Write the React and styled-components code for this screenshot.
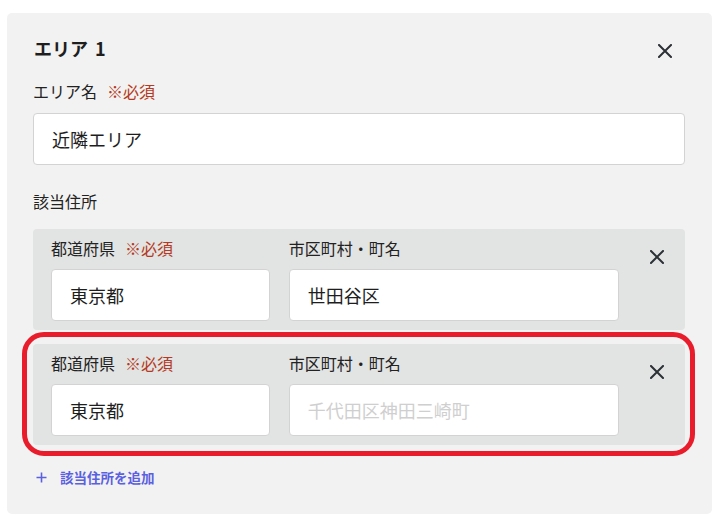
import React from 'react';
import styled, { createGlobalStyle } from 'styled-components';

const GlobalStyle = createGlobalStyle`
    body {
        margin: 0;
        background: #ffffff;
        font-family: "Noto Sans CJK JP", "Noto Sans", sans-serif;
        color: #222222;
    }
`;

const addresses = [
    { pref: '東京都', city: '世田谷区', highlighted: false },
    { pref: '東京都', city: '', highlighted: true },
];

const CloseIcon = ({ size = 14 }) => (
    <svg width={size} height={size} viewBox="0 0 14 14" fill="none">
        <path d="M1 1L13 13M13 1L1 13" stroke="#2c3135" strokeWidth="2" strokeLinecap="square"/>
    </svg>
);

const PlusIcon = () => (
    <svg width="11" height="11" viewBox="0 0 11 11" fill="none">
        <path d="M5.5 0.5V10.5M0.5 5.5H10.5" stroke="#5a60e0" strokeWidth="1.6"/>
    </svg>
);

const AddressRow = ({ pref, city, highlighted }) => (
    <Row highlighted={highlighted}>
        <Fields>
            <Field>
                <Label>都道府県<Required>※必須</Required></Label>
                <TextInput defaultValue={pref} readOnly/>
            </Field>
            <Field>
                <Label>市区町村・町名</Label>
                <TextInput defaultValue={city} placeholder="千代田区神田三崎町" readOnly/>
            </Field>
        </Fields>
        <RowClose>
            <IconButton><CloseIcon/></IconButton>
        </RowClose>
    </Row>
);

export default function App() {
    return (
        <Page>
            <GlobalStyle/>
            <Card>
                <CardHeader>
                    <Title>エリア 1</Title>
                    <IconButton><CloseIcon/></IconButton>
                </CardHeader>

                <Section>
                    <Label>エリア名<Required>※必須</Required></Label>
                    <TextInput defaultValue="近隣エリア" readOnly/>
                </Section>

                <SubHeading>該当住所</SubHeading>
                <Rows>
                    {addresses.map((a, i) => <AddressRow key={i} {...a}/>)}
                </Rows>

                <AddLink>
                    <PlusIcon/>
                    該当住所を追加
                </AddLink>
            </Card>
        </Page>
    );
}

const Page = styled.div`
    padding: 13px 8px 10px 7px;
`;

const Card = styled.div`
    width: 705px;
    box-sizing: border-box;
    padding: 23px 27px 27px 26px;
    background-color: #f2f2f2;
    border-radius: 5px;
    display: flex;
    flex-direction: column;
`;

const CardHeader = styled.div`
    display: flex;
    align-items: center;
    justify-content: space-between;
    height: 24px;
    padding-right: 13px;
    margin-bottom: 21px;
`;

const Title = styled.h2`
    margin: 0 0 0 1px;
    font-size: 18px;
    line-height: 24px;
    font-weight: 700;
    word-spacing: 3px;
    color: #1e1e1e;
`;

const IconButton = styled.button`
    display: flex;
    align-items: center;
    justify-content: center;
    padding: 0;
    margin-top: 6px;
    border: none;
    background: none;
    cursor: pointer;
`;

const Section = styled.div`
    display: flex;
    flex-direction: column;
    gap: 12px;
`;

const Label = styled.div`
    display: flex;
    align-items: center;
    gap: 10px;
    font-size: 16px;
    line-height: 20px;
    color: #222222;
`;

const Required = styled.span`
    color: #b53a22;
`;

const TextInput = styled.input`
    box-sizing: border-box;
    width: 100%;
    height: 52px;
    padding: 0 18px;
    border: 1px solid #d3d3d3;
    border-radius: 4px;
    background: #ffffff;
    font-family: inherit;
    font-size: 18px;
    color: #1e1e1e;
    outline: none;

    &::placeholder {
        color: #cfcfcf;
    }
`;

const SubHeading = styled.div`
    margin-top: 26px;
    font-size: 16px;
    line-height: 20px;
    color: #222222;
`;

const Rows = styled.div`
    display: flex;
    flex-direction: column;
    gap: 14px;
    margin-top: 18px;
`;

const Row = styled.div`
    position: relative;
    display: flex;
    height: 101px;
    box-sizing: border-box;
    padding: 9px 0 9px 18px;
    background-color: #e2e3e3;
    border-radius: 4px;

    &::after {
        content: '';
        display: ${props => props.highlighted ? 'block' : 'none'};
        position: absolute;
        top: -12px;
        left: -11px;
        right: -10px;
        bottom: -11px;
        border: 5px solid #e81c2a;
        border-radius: 22px;
        pointer-events: none;
    }
`;

const Fields = styled.div`
    flex: 1;
    display: grid;
    grid-template-columns: 218fr 329fr;
    column-gap: 19px;
`;

const Field = styled.div`
    display: flex;
    flex-direction: column;
    gap: 11px;
`;

const RowClose = styled.div`
    width: 66px;
    display: flex;
    justify-content: center;
    align-items: flex-start;
    padding-top: 6px;
    padding-left: 10px;
    box-sizing: border-box;
`;

const AddLink = styled.a`
    display: flex;
    align-items: center;
    gap: 13px;
    margin-top: 22px;
    padding-left: 3px;
    height: 20px;
    font-size: 13.5px;
    font-weight: 700;
    color: #5a60e0;
    cursor: pointer;
`;
